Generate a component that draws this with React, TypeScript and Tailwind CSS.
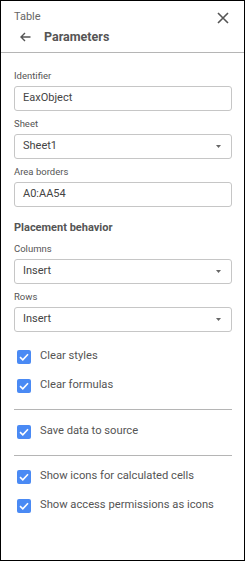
import React from "react";

function Caret() {
  return (
    <svg width="5" height="3" viewBox="0 0 5 3" className="shrink-0">
      <path d="M0 0 H5 L2.5 3 Z" fill="#666" />
    </svg>
  );
}

function Check({ label }: { label: string }) {
  return (
    <div className="flex items-center h-[29px]">
      <div className="ml-[3px] w-[14px] h-[14px] rounded-[2px] bg-[#4a8af4] flex items-center justify-center">
        <svg width="10" height="8" viewBox="0 0 10 8">
          <path d="M1 4.2 L3.8 6.8 L9 1.2" stroke="white" strokeWidth="1.6" fill="none" />
        </svg>
      </div>
      <span className="ml-[9px] text-[11.2px] text-[#555]">{label}</span>
    </div>
  );
}

function Label({ children }: { children: React.ReactNode }) {
  return <div className="text-[9.5px] text-[#555] h-[12px] leading-[12px]">{children}</div>;
}

function Field({ value, select }: { value: string; select?: boolean }) {
  return (
    <div className="h-[25px] border border-[#c6c6c6] rounded-[3px] flex items-center pl-[8px] pr-[10px] text-[11px] text-[#444]">
      <span className="flex-1">{value}</span>
      {select && <Caret />}
    </div>
  );
}

export default function App() {
  return (
    <div
      className="w-[245px] h-[561px] border border-black bg-white flex flex-col"
      style={{ fontFamily: "Roboto, 'Liberation Sans', sans-serif" }}
    >
      <div className="h-[52px] border-b border-[#b5b5b5] shrink-0 relative">
        <div className="absolute left-[13px] top-[8px] text-[11px] text-[#666]">Table</div>
        <svg className="absolute left-[216px] top-[11px]" width="12" height="12" viewBox="0 0 12 12">
          <path d="M1 1 L11 11 M11 1 L1 11" stroke="#555" strokeWidth="1.6" />
        </svg>
        <svg className="absolute left-[19px] top-[31px]" width="11" height="10" viewBox="0 0 11 10">
          <path d="M10.5 5 H1.5 M5 1 L1 5 L5 9" stroke="#555" strokeWidth="1.4" fill="none" />
        </svg>
        <div className="absolute left-[43px] top-[27px] text-[12.5px] font-bold text-[#555]">Parameters</div>
      </div>
      <div className="pl-[13px] pr-[12px] pt-[17px] flex flex-col">
        <Label>Identifier</Label>
        <div className="mt-[4px]"><Field value="EaxObject" /></div>
        <div className="mt-[7px]"><Label>Sheet</Label></div>
        <div className="mt-[4px]"><Field value="Sheet1" select /></div>
        <div className="mt-[7px]"><Label>Area borders</Label></div>
        <div className="mt-[4px]"><Field value="A0:AA54" /></div>
        <div className="mt-[14px] text-[11px] font-bold text-[#555] h-[14px] leading-[14px]">Placement behavior</div>
        <div className="mt-[8px]"><Label>Columns</Label></div>
        <div className="mt-[4px]"><Field value="Insert" select /></div>
        <div className="mt-[7px]"><Label>Rows</Label></div>
        <div className="mt-[4px]"><Field value="Insert" select /></div>
        <div className="mt-[10px]">
          <Check label="Clear styles" />
          <Check label="Clear formulas" />
        </div>
        <div className="mt-[9px] border-t border-[#b5b5b5]" />
        <div className="mt-[7px]">
          <Check label="Save data to source" />
        </div>
        <div className="mt-[9px] border-t border-[#b5b5b5]" />
        <div className="mt-[6px]">
          <Check label="Show icons for calculated cells" />
          <Check label="Show access permissions as icons" />
        </div>
      </div>
    </div>
  );
}
